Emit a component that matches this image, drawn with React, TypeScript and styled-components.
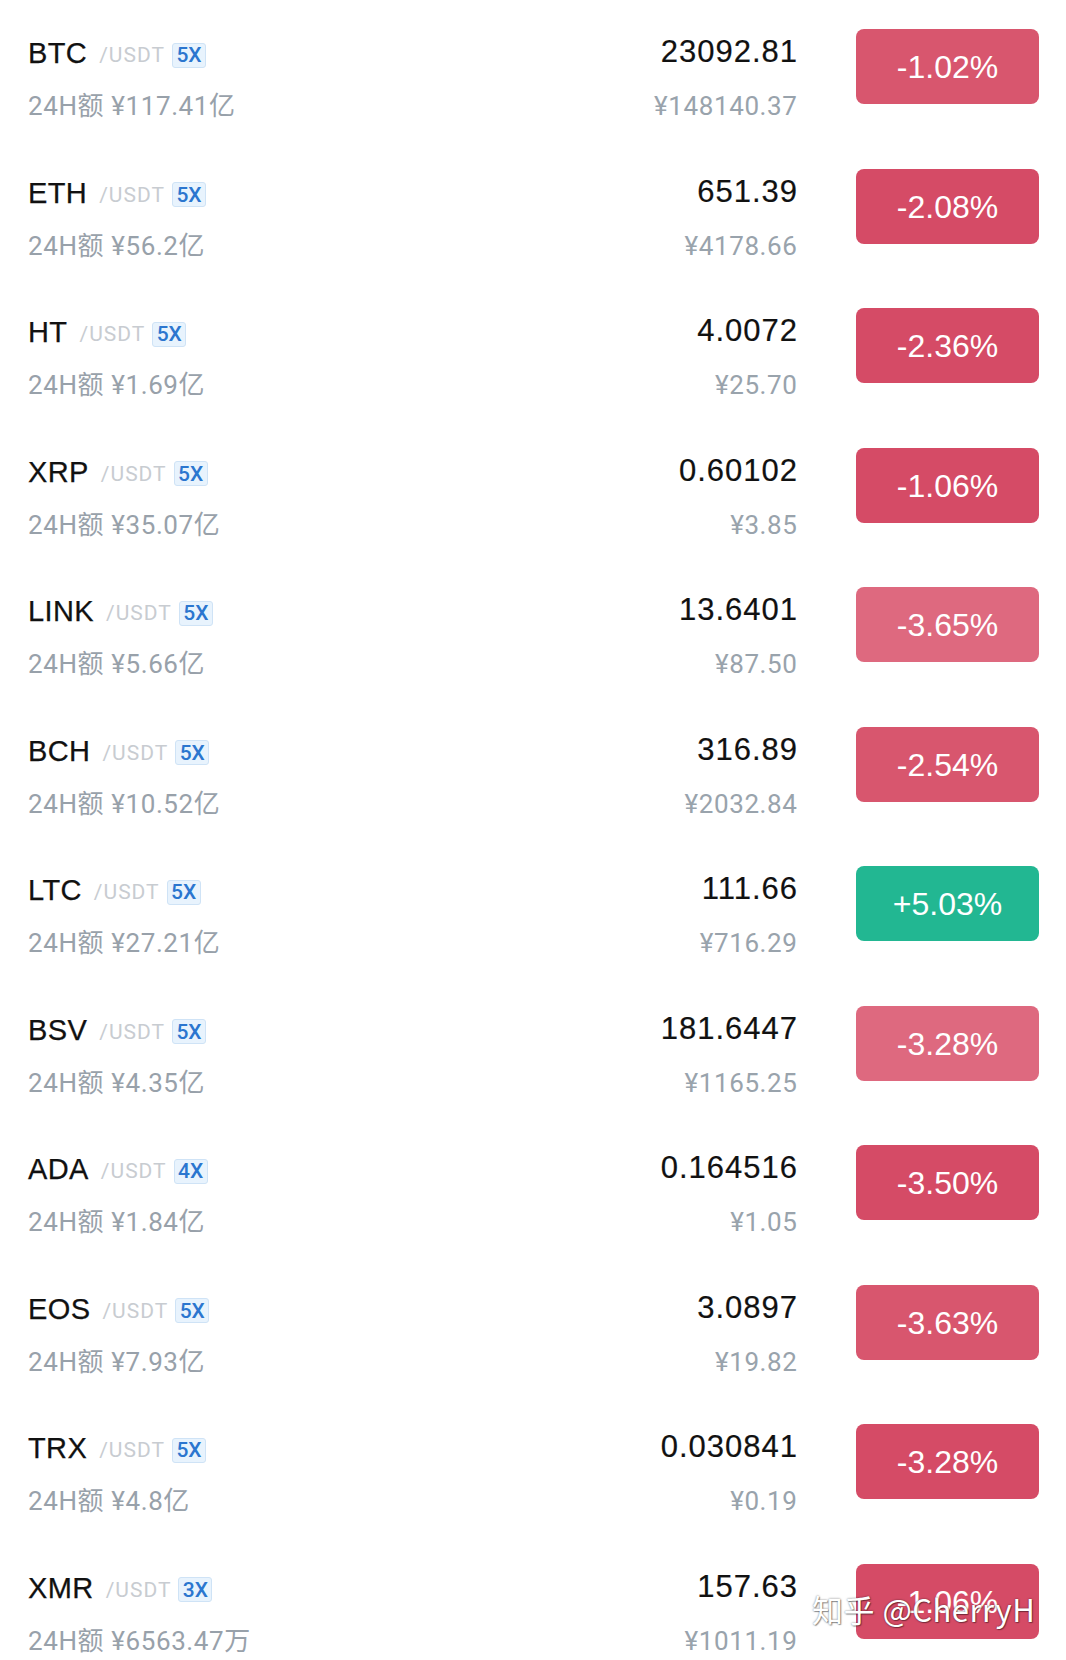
import React from "react";
import styled, { createGlobalStyle } from "styled-components";

const Global = createGlobalStyle`
  html, body { margin: 0; padding: 0; background: #ffffff; }
  body { overflow: hidden; }
`;

type Coin = {
  name: string;
  lev: string;
  vol: string;
  price: string;
  cny: string;
  change: string;
  tone: "red" | "deep" | "pink" | "green";
};

const coins: Coin[] = [
  { name: "BTC", lev: "5X", vol: "¥117.41亿", price: "23092.81", cny: "¥148140.37", change: "-1.02%", tone: "red" },
  { name: "ETH", lev: "5X", vol: "¥56.2亿", price: "651.39", cny: "¥4178.66", change: "-2.08%", tone: "deep" },
  { name: "HT", lev: "5X", vol: "¥1.69亿", price: "4.0072", cny: "¥25.70", change: "-2.36%", tone: "deep" },
  { name: "XRP", lev: "5X", vol: "¥35.07亿", price: "0.60102", cny: "¥3.85", change: "-1.06%", tone: "deep" },
  { name: "LINK", lev: "5X", vol: "¥5.66亿", price: "13.6401", cny: "¥87.50", change: "-3.65%", tone: "pink" },
  { name: "BCH", lev: "5X", vol: "¥10.52亿", price: "316.89", cny: "¥2032.84", change: "-2.54%", tone: "red" },
  { name: "LTC", lev: "5X", vol: "¥27.21亿", price: "111.66", cny: "¥716.29", change: "+5.03%", tone: "green" },
  { name: "BSV", lev: "5X", vol: "¥4.35亿", price: "181.6447", cny: "¥1165.25", change: "-3.28%", tone: "pink" },
  { name: "ADA", lev: "4X", vol: "¥1.84亿", price: "0.164516", cny: "¥1.05", change: "-3.50%", tone: "deep" },
  { name: "EOS", lev: "5X", vol: "¥7.93亿", price: "3.0897", cny: "¥19.82", change: "-3.63%", tone: "red" },
  { name: "TRX", lev: "5X", vol: "¥4.8亿", price: "0.030841", cny: "¥0.19", change: "-3.28%", tone: "deep" },
  { name: "XMR", lev: "3X", vol: "¥6563.47万", price: "157.63", cny: "¥1011.19", change: "-1.06%", tone: "deep" },
];

const toneColor: Record<Coin["tone"], string> = {
  red: "#d8566e",
  deep: "#d54b66",
  pink: "#de697f",
  green: "#22b792",
};

const Page = styled.div`
  position: relative;
  width: 1066px;
  height: 1660px;
  overflow: hidden;
  background: #ffffff;
`;

const List = styled.div`
  display: flex;
  flex-direction: column;
`;

const Row = styled.div`
  display: grid;
  grid-template-columns: 1fr auto auto;
  height: 139.5px;
  flex: none;
  padding-left: 28px;
  padding-right: 27px;
  box-sizing: border-box;
`;

const Left = styled.div`
  display: flex;
  flex-direction: column;
  padding-top: 37px;
`;

const Pair = styled.div`
  display: flex;
  align-items: center;
  height: 32px;
`;

const Name = styled.span`
  font-family: "Liberation Sans", Arial, sans-serif;
  font-size: 29px;
  line-height: 32px;
  color: #111111;
  letter-spacing: 0.4px;
  -webkit-text-stroke: 0.25px #111111;
`;

const Quote = styled.span`
  font-family: "Roboto", "Liberation Sans", sans-serif;
  font-size: 21px;
  line-height: 24px;
  color: #c8ccd1;
  margin-left: 12px;
  margin-top: 4px;
  letter-spacing: 1px;
`;

const Lev = styled.span`
  display: inline-flex;
  align-items: center;
  justify-content: center;
  box-sizing: border-box;
  width: 34px;
  height: 25px;
  margin-left: 7px;
  margin-top: 4px;
  border: 1px solid #cfe3f6;
  border-radius: 3px;
  background: #e8f3fd;
  font-family: "Roboto", "Liberation Sans", sans-serif;
  font-weight: 500;
  font-size: 21px;
  color: #2b76cf;
`;

const Sub = styled.div`
  font-family: "Roboto", "Noto Sans CJK SC", sans-serif;
  font-size: 26px;
  line-height: 32px;
  color: #98a1aa;
  letter-spacing: 0.6px;
  margin-top: 21px;
  white-space: nowrap;
`;

const Right = styled.div`
  display: flex;
  flex-direction: column;
  align-items: flex-end;
  padding-top: 36px;
`;

const Price = styled.div`
  font-family: "Liberation Sans", Arial, sans-serif;
  font-size: 31px;
  line-height: 32px;
  color: #111111;
  letter-spacing: 1px;
  margin-right: -1px;
  -webkit-text-stroke: 0.2px #111111;
`;

const Cny = styled.div`
  font-family: "Roboto", "Noto Sans CJK SC", sans-serif;
  font-size: 26px;
  line-height: 32px;
  color: #99a3ac;
  letter-spacing: 0.6px;
  margin-top: 22px;
  margin-right: -0.5px;
`;

const Change = styled.div<{ $bg: string }>`
  display: flex;
  align-items: center;
  justify-content: center;
  width: 183px;
  height: 75px;
  margin-top: 29px;
  margin-left: 59px;
  border-radius: 8px;
  background: ${(p) => p.$bg};
  color: #ffffff;
  font-family: "Liberation Sans", Arial, sans-serif;
  font-size: 32px;
  padding-top: 2px;
  box-sizing: border-box;
`;

const Watermark = styled.div`
  position: absolute;
  left: 812px;
  top: 1589px;
  font-family: "Noto Sans CJK SC", "Liberation Sans", sans-serif;
  font-size: 31px;
  line-height: 40px;
  color: #ffffff;
  white-space: nowrap;
  letter-spacing: 0.5px;
  text-shadow: 0 0 2px rgba(0, 0, 0, 0.55), 1px 1px 1px rgba(0, 0, 0, 0.35);
`;

export default function App() {
  return (
    <Page>
      <Global />
      <List>
        {coins.map((c) => (
          <Row key={c.name}>
            <Left>
              <Pair>
                <Name>{c.name}</Name>
                <Quote>/USDT</Quote>
                <Lev>{c.lev}</Lev>
              </Pair>
              <Sub>24H额 {c.vol}</Sub>
            </Left>
            <Right>
              <Price>{c.price}</Price>
              <Cny>{c.cny}</Cny>
            </Right>
            <Change $bg={toneColor[c.tone]}>{c.change}</Change>
          </Row>
        ))}
      </List>
      <Watermark>知乎 @CherryH</Watermark>
    </Page>
  );
}
